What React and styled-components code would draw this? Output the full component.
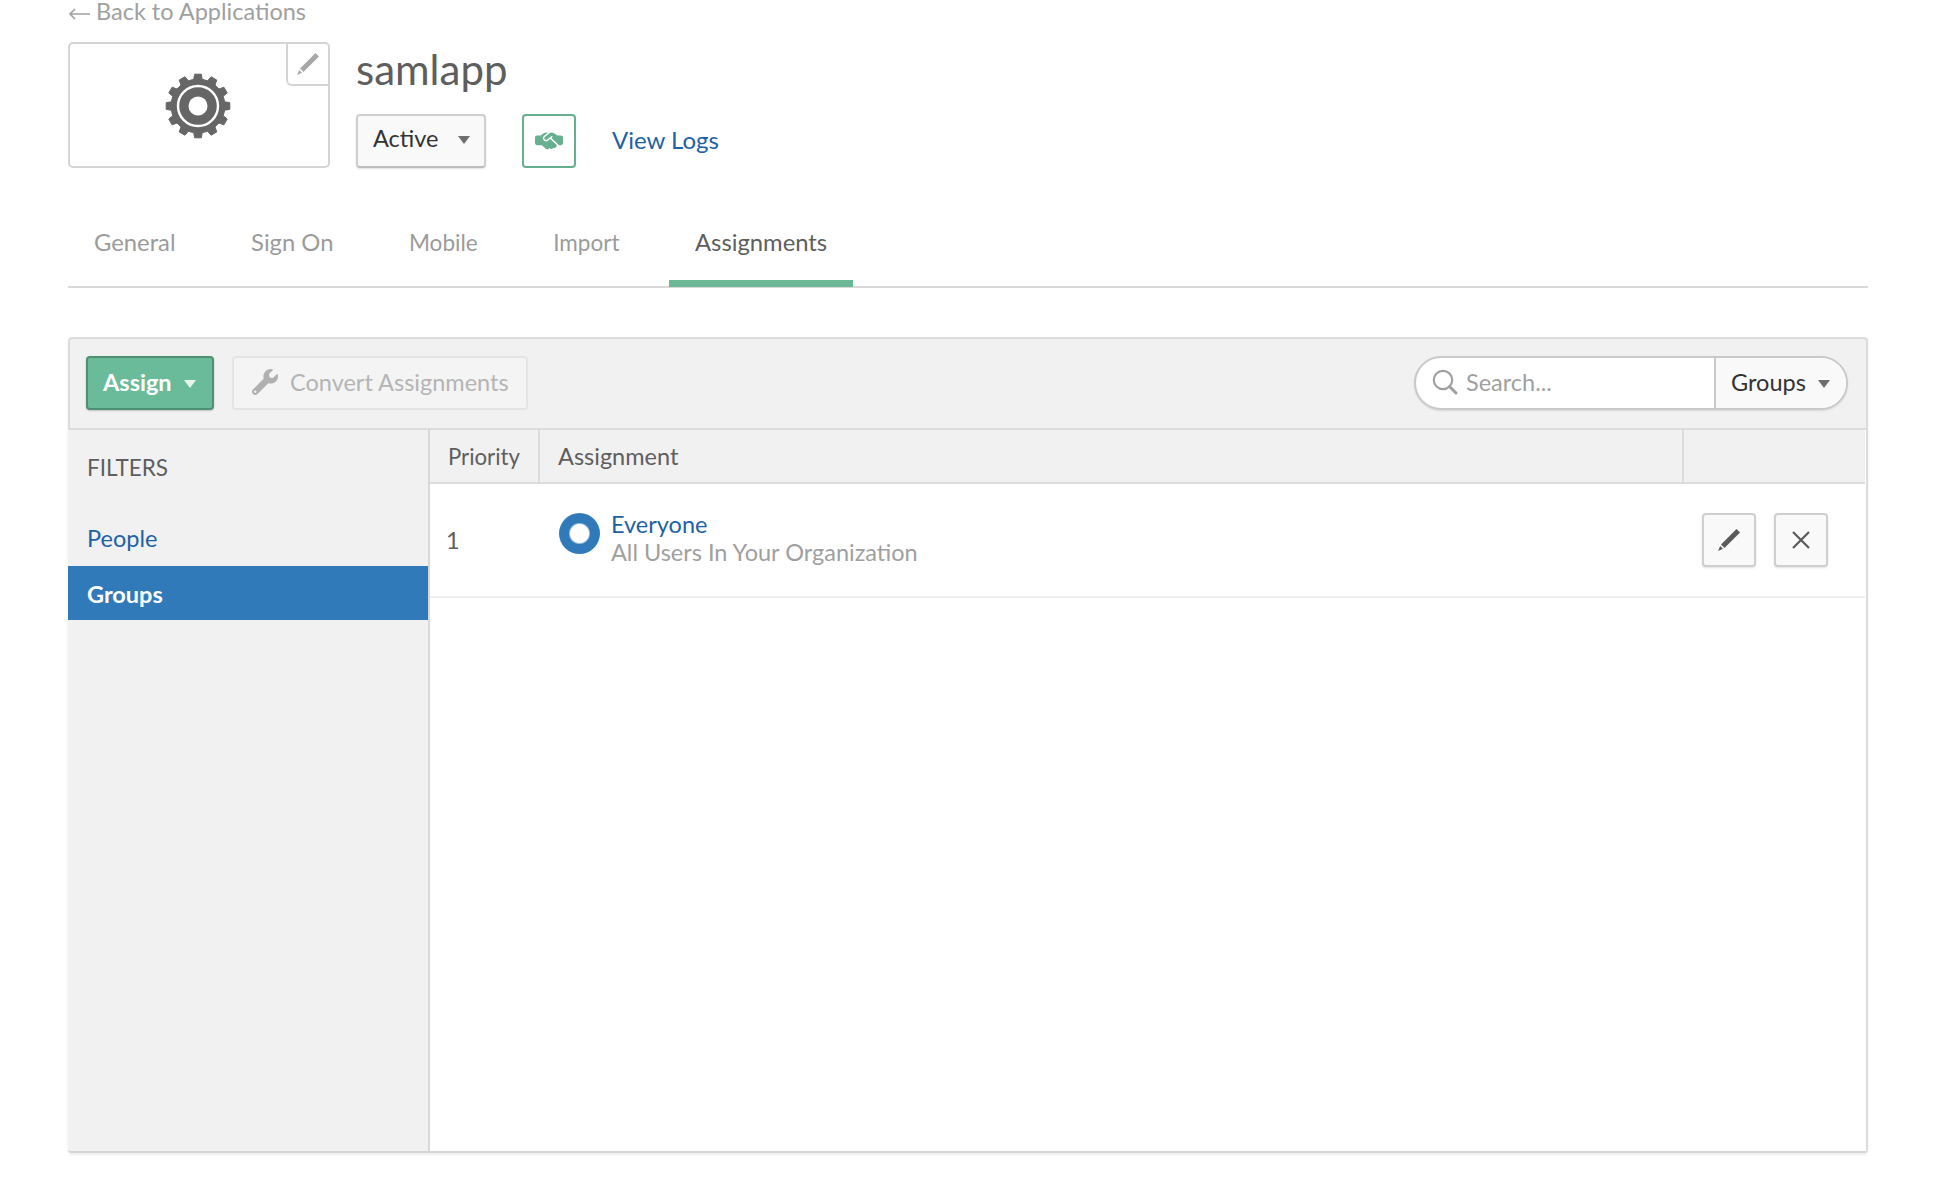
import React from 'react';
import styled, { createGlobalStyle } from 'styled-components';
import { FaWrench } from 'react-icons/fa';
import { FaHandshakeSimple } from 'react-icons/fa6';

const Global = createGlobalStyle`
  html, body { margin: 0; padding: 0; background: #fff; }
  body { font-family: Lato, "Open Sans", sans-serif; font-size: 23.5px; color: #5e5e5e; }
  * { box-sizing: border-box; }
`;

const Page = styled.div`
  width: 1948px;
  height: 1202px;
  padding: 0 80px 0 68px;
  overflow: hidden;
`;
const BackLink = styled.div`
  height: 42px;
  display: flex;
  align-items: flex-start;
  gap: 6px;
  line-height: 22px;
  color: #a0a0a0;
`;
const Header = styled.div`
  display: flex;
  gap: 26px;
`;
const LogoBox = styled.div`
  position: relative;
  width: 262px;
  height: 126px;
  border: 2px solid #d4d4d4;
  border-radius: 5px;
  display: flex;
  align-items: center;
  justify-content: center;
  padding: 2px 3px 0 0;
`;
const LogoEdit = styled.div`
  position: absolute;
  top: -2px;
  right: -2px;
  width: 44px;
  height: 44px;
  border: 2px solid #d4d4d4;
  border-top-color: transparent;
  border-right-color: transparent;
  border-bottom-left-radius: 6px;
  display: flex;
  align-items: center;
  justify-content: center;
`;
const HeaderInfo = styled.div`
  display: flex;
  flex-direction: column;
  justify-content: space-between;
`;
const Title = styled.h1`
  margin: 4px 0 0;
  font-size: 42px;
  font-weight: 400;
  line-height: 46px;
  color: #5e5e5e;
`;
const Controls = styled.div`
  display: flex;
  align-items: center;
`;
const Caret = styled.span`
  display: inline-block;
  width: 0;
  height: 0;
  margin-top: 3px;
  border-left: 6px solid transparent;
  border-right: 6px solid transparent;
  border-top: 8px solid ${p => p.$color || '#6e6e6e'};
`;
const StatusSelect = styled.div`
  width: 130px;
  height: 54px;
  display: flex;
  align-items: center;
  justify-content: space-between;
  padding: 0 14px 6px 15px;
  background: #f9f9f9;
  border: 2px solid #cfcfcf;
  border-bottom-color: #bdbdbd;
  border-radius: 4px;
  box-shadow: 0 1px 2px rgba(0,0,0,.12);
  color: #333;
`;
const DealBox = styled.div`
  width: 54px;
  height: 54px;
  margin-left: 36px;
  border: 2px solid #66b08f;
  border-radius: 4px;
  display: flex;
  align-items: center;
  justify-content: center;
  color: #66b08f;
`;
const LinkText = styled.a`
  color: #1e62a5;
  text-decoration: none;
`;
const ViewLogs = styled(LinkText)`
  margin-left: 36px;
  margin-bottom: 3px;
  font-size: 24px;
`;
const TabBar = styled.div`
  margin-top: 40px;
  height: 80px;
  display: flex;
  gap: 23.5px;
  border-bottom: 2px solid #d8d8d8;
`;
const Tab = styled.div`
  height: 79px;
  padding: ${p => (p.$size ? '1px' : '0')} 26px 0;
  font-size: ${p => p.$size || '23.8px'};
  line-height: 68px;
  color: ${p => (p.$active ? '#5e5e5e' : '#9b9b9b')};
  border-bottom: 7px solid ${p => (p.$active ? '#6bb897' : 'transparent')};
`;
const Panel = styled.div`
  margin-top: 49px;
  height: 816px;
  background: #f1f1f1;
  border-top: 2px solid #dcdcdc;
  border-right: 2px solid #dcdcdc;
  border-bottom: 2px solid #d4d4d4;
  border-radius: 4px;
  box-shadow: 0 2px 3px rgba(0,0,0,.08);
  display: flex;
  flex-direction: column;
`;
const Toolbar = styled.div`
  height: 91px;
  flex: none;
  border-left: 2px solid #dcdcdc;
  border-top-left-radius: 4px;
  border-bottom: 2px solid #dcdcdc;
  padding: 17px 18px 0 16px;
  display: flex;
  align-items: flex-start;
`;
const AssignButton = styled.div`
  width: 128px;
  height: 54px;
  display: flex;
  align-items: center;
  gap: 12px;
  padding: 0 0 2px 15px;
  background: #6abb99;
  border: 2px solid #4f8f74;
  border-radius: 4px;
  box-shadow: 0 1px 2px rgba(0,0,0,.2);
  color: #fff;
  font-weight: 700;
`;
const ConvertButton = styled.div`
  width: 296px;
  height: 54px;
  margin-left: 18px;
  display: flex;
  align-items: center;
  gap: 12px;
  padding: 0 0 2px 18px;
  background: #f4f4f4;
  border: 2px solid #e4e4e4;
  border-radius: 4px;
  color: #b4b4b4;
`;
const SearchGroup = styled.div`
  width: 434px;
  height: 54px;
  margin-left: auto;
  display: flex;
  background: #fff;
  border: 2px solid #c9c9c9;
  border-radius: 27px;
  box-shadow: 0 1px 2px rgba(0,0,0,.1);
  overflow: hidden;
`;
const SearchField = styled.div`
  flex: 1;
  display: flex;
  align-items: center;
  gap: 8px;
  padding: 0 0 2px 16px;
  color: #a0a0a0;
`;
const SearchScope = styled.div`
  width: 132px;
  display: flex;
  align-items: center;
  justify-content: space-between;
  padding: 0 16px 2px 15px;
  background: #f9f9f9;
  border-left: 2px solid #c9c9c9;
  color: #333;
`;
const Body = styled.div`
  flex: 1;
  display: flex;
  min-height: 0;
`;
const Sidebar = styled.div`
  width: 362px;
  flex: none;
  border-right: 2px solid #d8d8d8;
  padding-top: 24px;
`;
const FilterTitle = styled.div`
  padding-left: 19px;
  font-size: 22.5px;
  line-height: 28px;
  color: #5e5e5e;
`;
const FilterItem = styled.div`
  height: 54px;
  display: flex;
  align-items: center;
  padding: ${p => (p.$active ? '2px' : '0')} 0 0 19px;
  margin: ${p => (p.$first ? '29px 0 1px' : '0')};
  background: ${p => (p.$active ? '#317ab9' : 'transparent')};
  color: ${p => (p.$active ? '#fff' : '#1e62a5')};
  font-weight: ${p => (p.$active ? 700 : 400)};
`;
const Main = styled.div`
  flex: 1;
  background: #fff;
  padding-right: 1px;
`;
const HeadRow = styled.div`
  height: 54px;
  display: grid;
  grid-template-columns: 110px 1144px 1fr;
  background: #f1f1f1;
  border-bottom: 2px solid #dcdcdc;
`;
const HeadCell = styled.div`
  display: flex;
  align-items: center;
  padding: 0 0 0 18px;
  border-right: ${p => (p.$last ? 'none' : '2px solid #dcdcdc')};
  color: #5e5e5e;
  font-size: ${p => p.$size || 'inherit'};
`;
const DataRow = styled.div`
  height: 114px;
  display: grid;
  grid-template-columns: 110px 1144px 1fr;
  border-bottom: 2px solid #efefef;
`;
const PriorityCell = styled.div`
  padding: 42px 0 0 16px;
  line-height: 28px;
`;
const AssignmentCell = styled.div`
  display: flex;
  gap: 11px;
  padding: 26px 0 0 19px;
`;
const GroupIcon = styled.div`
  width: 41px;
  height: 41px;
  flex: none;
  margin-top: 3px;
  border-radius: 50%;
  background: radial-gradient(circle, #fff 0 9px, #317ab9 11px);
`;
const GroupText = styled.div`
  line-height: 28px;
`;
const GroupSub = styled.div`
  color: #a0a0a0;
`;
const ActionCell = styled.div`
  display: flex;
  gap: 18px;
  padding: 29px 0 0 18px;
`;
const IconButton = styled.div`
  width: 54px;
  height: 54px;
  display: flex;
  align-items: center;
  justify-content: center;
  background: #f9f9f9;
  border: 2px solid #cfcfcf;
  border-radius: 4px;
  box-shadow: 0 1px 2px rgba(0,0,0,.12);
`;

function gearPath(cx, cy, teeth, rOut, rIn) {
  const pts = [];
  const step = (Math.PI * 2) / teeth;
  for (let i = 0; i < teeth; i++) {
    const a = i * step - Math.PI / 2;
    const w = step * 0.2;
    const w2 = step * 0.3;
    const at = (r, t) => `${(cx + r * Math.cos(t)).toFixed(2)} ${(cy + r * Math.sin(t)).toFixed(2)}`;
    pts.push(at(rIn, a - w2), at(rOut, a - w), at(rOut, a + w), at(rIn, a + w2));
  }
  return 'M' + pts.join('L') + 'Z';
}

const Gear = () => (
  <svg width="66" height="66" viewBox="0 0 66 66" aria-hidden="true">
    <path d={gearPath(33, 33, 12, 32, 27)} fill="#666" stroke="#666" strokeWidth="1" strokeLinejoin="round" />
    <circle cx="33" cy="33" r="20" fill="none" stroke="#fff" strokeWidth="2.4" />
    <circle cx="33" cy="33" r="9.5" fill="#fff" />
  </svg>
);
const Pencil = ({ size = 24, color = '#5a5a5a' }) => (
  <svg width={size} height={size} viewBox="0 0 24 24" aria-hidden="true">
    <path d="M19.5 1 L23 4.5 L7.5 20 L4 16.5 Z" fill={color} />
    <path d="M3.2 18 L6 20.8 L1 23 Z" fill={color} />
  </svg>
);
const Cross = () => (
  <svg width="20" height="20" viewBox="0 0 20 20" aria-hidden="true">
    <path d="M2 2 L18 18 M18 2 L2 18" stroke="#5a5a5a" strokeWidth="2.2" fill="none" />
  </svg>
);
const SearchIcon = () => (
  <svg width="26" height="26" viewBox="0 0 26 26" aria-hidden="true">
    <circle cx="11" cy="11" r="9.2" fill="none" stroke="#9f9f9f" strokeWidth="2.2" />
    <path d="M17.5 17.5 L24 24" stroke="#9f9f9f" strokeWidth="3" strokeLinecap="round" />
  </svg>
);
const BackArrow = () => (
  <svg width="22" height="14" viewBox="0 0 22 14" style={{ marginTop: 7 }} aria-hidden="true">
    <path d="M22 7 H2 M7 2 L2 7 L7 12" stroke="#a0a0a0" strokeWidth="1.6" fill="none" />
  </svg>
);

export default function App() {
  return (
    <Page>
      <Global />
      <BackLink><BackArrow />Back to Applications</BackLink>
      <Header>
        <LogoBox>
          <Gear />
          <LogoEdit><Pencil size={24} color="#a8a8a8" /></LogoEdit>
        </LogoBox>
        <HeaderInfo>
          <Title>samlapp</Title>
          <Controls>
            <StatusSelect>Active <Caret /></StatusSelect>
            <DealBox><FaHandshakeSimple size={28} /></DealBox>
            <ViewLogs>View Logs</ViewLogs>
          </Controls>
        </HeaderInfo>
      </Header>
      <TabBar>
        <Tab>General</Tab>
        <Tab>Sign On</Tab>
        <Tab $size="22.6px">Mobile</Tab>
        <Tab $size="22.5px">Import</Tab>
        <Tab $active>Assignments</Tab>
      </TabBar>
      <Panel>
        <Toolbar>
          <AssignButton>Assign <Caret $color="#e8f5ef" /></AssignButton>
          <ConvertButton><FaWrench size={26} color="#b0b0b0" />Convert Assignments</ConvertButton>
          <SearchGroup>
            <SearchField><SearchIcon />Search...</SearchField>
            <SearchScope>Groups <Caret /></SearchScope>
          </SearchGroup>
        </Toolbar>
        <Body>
          <Sidebar>
            <FilterTitle>FILTERS</FilterTitle>
            <FilterItem $first>People</FilterItem>
            <FilterItem $active>Groups</FilterItem>
          </Sidebar>
          <Main>
            <HeadRow>
              <HeadCell $size="22.2px">Priority</HeadCell>
              <HeadCell>Assignment</HeadCell>
              <HeadCell $last />
            </HeadRow>
            <DataRow>
              <PriorityCell>1</PriorityCell>
              <AssignmentCell>
                <GroupIcon />
                <GroupText>
                  <LinkText>Everyone</LinkText>
                  <GroupSub>All Users In Your Organization</GroupSub>
                </GroupText>
              </AssignmentCell>
              <ActionCell>
                <IconButton><Pencil /></IconButton>
                <IconButton><Cross /></IconButton>
              </ActionCell>
            </DataRow>
          </Main>
        </Body>
      </Panel>
    </Page>
  );
}
